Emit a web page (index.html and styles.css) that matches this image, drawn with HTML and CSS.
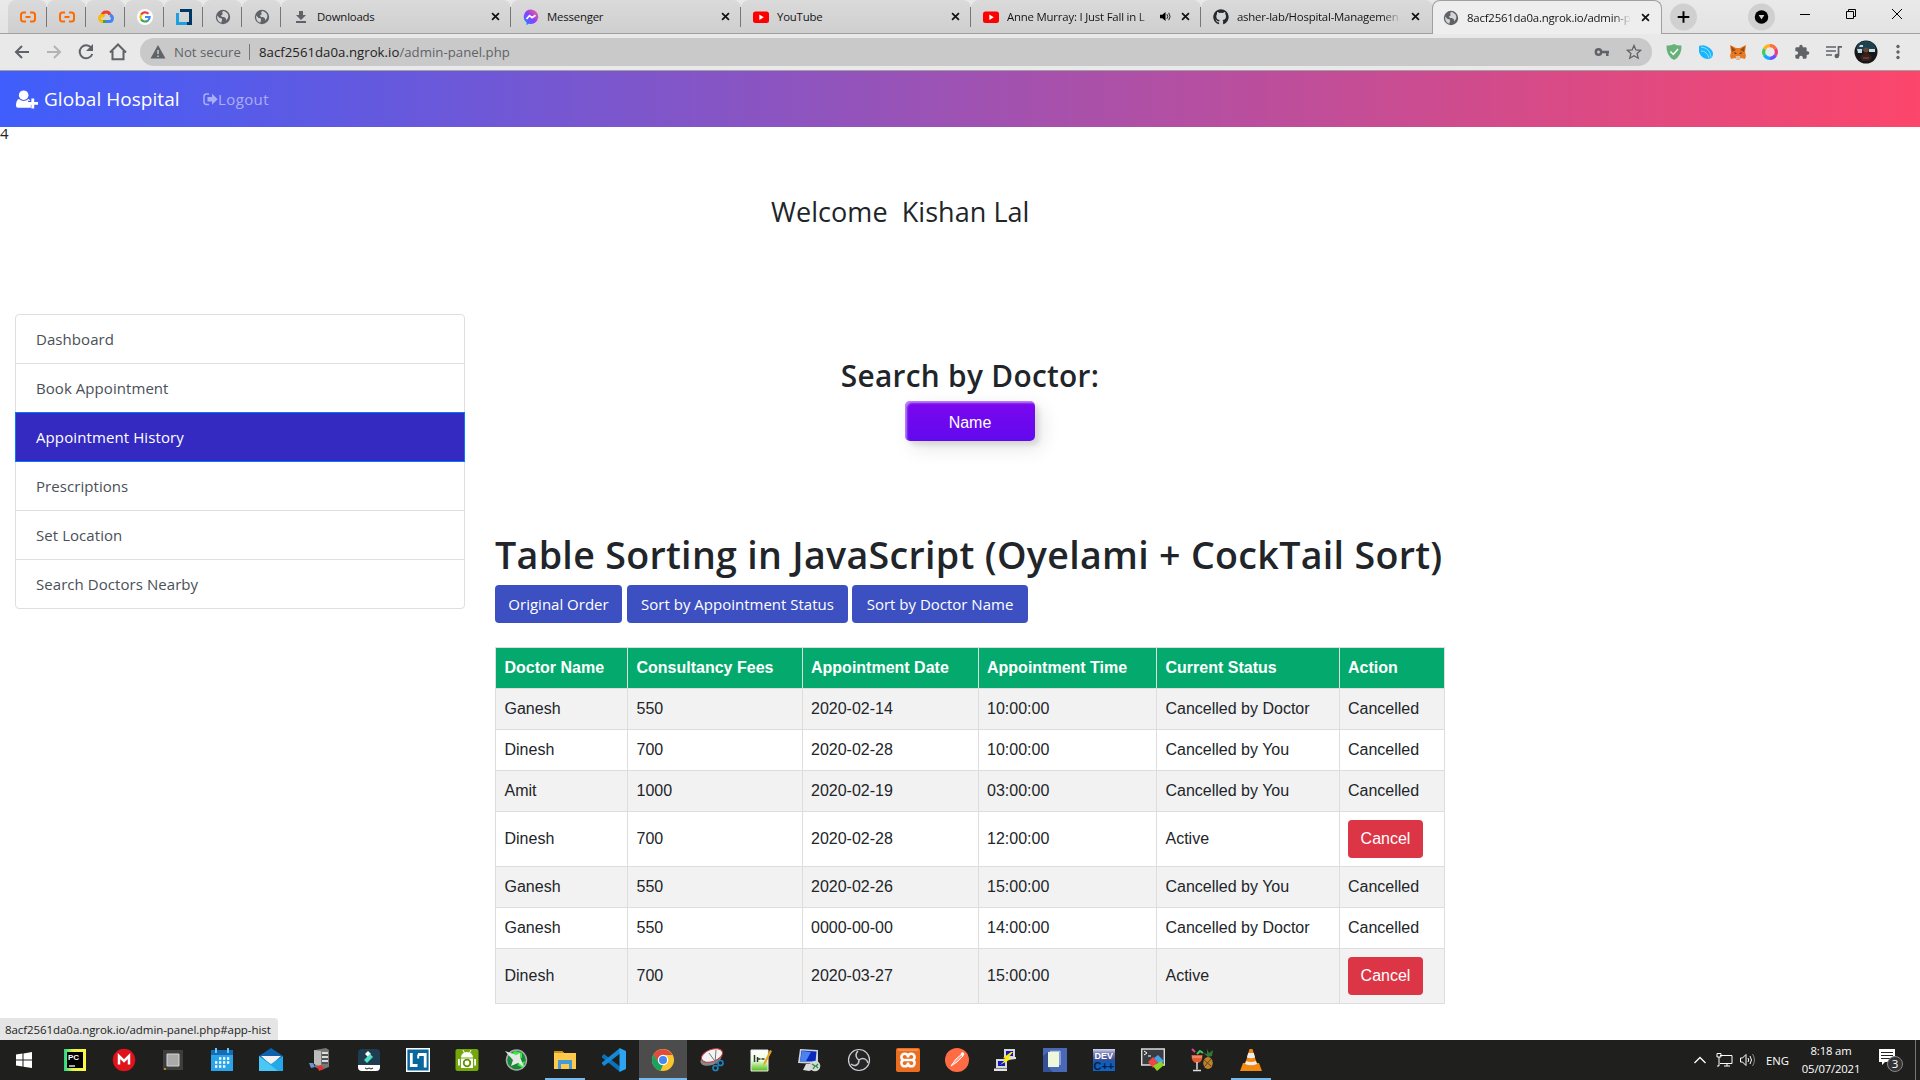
FILE: index.html
```html
<!DOCTYPE html>
<html lang="en">
<head>
<meta charset="utf-8">
<title>Global Hospital</title>
<link rel="stylesheet" href="styles.css">
</head>
<body>
<svg class="defs" width="0" height="0">
  <symbol id="globe" viewBox="0 0 16 16"><circle cx="8" cy="8" r="7.2" fill="#5f6368"/><path d="M2.2 6.5 4.5 9l2 .3.6 1.2-.8 3.2C3.5 13 1.8 10.500 2.200 6.500ZM8 2l-1 2 1 1-2 1.500 1 1.500h2l2 1.500v2l2-2.500C14.300 6 12 2.500 8 2Z" fill="#d5d5d5"/></symbol>
  <symbol id="close" viewBox="0 0 10 10"><path d="m1.200 1.200 7.600 7.600m0-7.600L1.200 8.800" stroke="#111" stroke-width="1.900"/></symbol>
  <symbol id="ngrok" viewBox="0 0 16 16"><path d="M6 3.500H3.500Q1 3.500 1 6v4q0 2.500 2.500 2.500H6M10 3.500h2.500Q15 3.500 15 6v4q0 2.500-2.500 2.500H10M5.500 8h5" fill="none" stroke="#ff6a00" stroke-width="2"/></symbol>
  <symbol id="youtube" viewBox="0 0 16 16"><rect y="2.500" width="16" height="11.500" rx="2.500" fill="#f00"/><path d="m6.300 5.500 4.500 2.700-4.500 2.700Z" fill="#fff"/></symbol>
</svg>

<header class="browser">
  <div class="tabstrip">
    <div class="tab pinned"><svg class="fav"><use href="#ngrok"/></svg></div>
    <div class="tab pinned"><svg class="fav"><use href="#ngrok"/></svg></div>
    <div class="tab pinned"><svg class="fav" viewBox="0 0 16 16" fill="none" stroke-width="3"><path d="M4 6.500C5 2 11 2 12 6" stroke="#ea4335"/><path d="M12 6c3.500 1 3 6.500-.500 6.500H8" stroke="#4285f4"/><path d="M8 12.500H4.500" stroke="#34a853"/><path d="M5 12.500C.800 12.500.500 7 4 6.500q1.500 0 2.500 1" stroke="#fbbc05"/></svg></div>
    <div class="tab pinned"><svg class="fav" viewBox="0 0 16 16"><circle cx="8" cy="8" r="8" fill="#fff"/><g fill="none" stroke-width="2.100"><path d="M4.100 5.600A4.700 4.700 0 0 1 11.500 4.800" stroke="#ea4335"/><path d="M4.100 5.600a4.700 4.700 0 0 0 0 4.800" stroke="#fbbc05"/><path d="M4.100 10.400a4.700 4.700 0 0 0 6.800 1.200" stroke="#34a853"/><path d="M10.900 11.600A4.500 4.500 0 0 0 12.700 8H8" stroke="#4285f4"/></g></svg></div>
    <div class="tab pinned"><svg class="fav" viewBox="0 0 16 16"><path d="M4 0h12v16h-5v-3h2V3H4Z" fill="#003865"/><path d="M0 4h3v9h8v3H0Z" fill="#1ba0e2"/></svg></div>
    <div class="tab pinned"><svg class="fav"><use href="#globe"/></svg></div>
    <div class="tab pinned"><svg class="fav"><use href="#globe"/></svg></div>
    <div class="tab"><svg class="fav" viewBox="0 0 16 16"><path d="M6 2h4v4h3l-5 5-5-5h3ZM3 12h10v2H3Z" fill="#5f6368"/></svg><span class="label">Downloads</span><svg class="x"><use href="#close"/></svg></div>
    <div class="tab"><svg class="fav" viewBox="0 0 16 16"><defs><linearGradient id="msg" x1="0" y1="1" x2="1" y2="0"><stop stop-color="#0895ff"/><stop offset=".5" stop-color="#8f3cff"/><stop offset="1" stop-color="#ff6c77"/></linearGradient></defs><path d="M8 .500a7.500 7.200 0 1 1-2 14.200L3.500 16v-2.500A7.300 7.300 0 0 1 8 .500Z" fill="url(#msg)"/><path d="m3.500 10 3-3.300 2.500 2 3.500-2.500" fill="none" stroke="#fff" stroke-width="1.700"/></svg><span class="label">Messenger</span><svg class="x"><use href="#close"/></svg></div>
    <div class="tab"><svg class="fav"><use href="#youtube"/></svg><span class="label">YouTube</span><svg class="x"><use href="#close"/></svg></div>
    <div class="tab"><svg class="fav"><use href="#youtube"/></svg><span class="label fade murray">Anne Murray: I Just Fall in L</span><svg class="speaker" viewBox="0 0 12 12"><path d="M0 4h2.500L6 1v10L2.500 8H0Z"/><path d="M7.500 3.500q2 2.500 0 5M9.500 2q3 4 0 8" fill="none" stroke="#111"/></svg><svg class="x"><use href="#close"/></svg></div>
    <div class="tab last"><svg class="fav" viewBox="0 0 16 16"><path d="M8 .300a7.700 7.700 0 0 0-2.500 15c.500 0 .600-.200.600-.500v-1.500c-2 .400-2.600-.900-2.800-1.500-.200-.500-.700-.900-1.200-1.200 1-.300 1.600.700 2.100 1.300.600.700 1.400.500 2 .200 0-.500.300-.900.600-1.100-1.900-.200-3.500-.900-3.500-3.800 0-.900.300-1.500.800-2.100-.300-.700-.100-1.500.100-2 .800 0 1.500.400 2.100.800a7 7 0 0 1 3.700 0c.700-.500 1.400-.800 2.100-.800.300.600.300 1.400.1 2 .500.600.800 1.300.8 2.100 0 2.900-1.700 3.600-3.500 3.800.400.300.600.800.600 1.500v2.300c0 .300.100.500.600.400A7.700 7.700 0 0 0 8 .300Z" fill="#24292e"/></svg><span class="label fade asher">asher-lab/Hospital-Managemen</span><svg class="x"><use href="#close"/></svg></div>
    <div class="tab active"><svg class="fav"><use href="#globe"/></svg><span class="label fade">8acf2561da0a.ngrok.io/admin-p</span><svg class="x"><use href="#close"/></svg></div>
    <svg class="round newtab" viewBox="0 0 28 28"><circle cx="14" cy="14" r="14" fill="#d0d0d0"/><path d="M8 14h12M14 8v12" stroke="#000" stroke-width="2"/></svg>
    <div class="window-controls">
      <svg class="round" viewBox="0 0 28 28"><circle cx="14" cy="14" r="14" fill="#d0d0d0"/><circle cx="14" cy="14" r="7" fill="#000"/><path d="M11 12h6l-3 4.500Z" fill="#d0d0d0"/></svg>
      <svg class="wc" viewBox="0 0 46 28"><path d="M18 14.500h10" stroke="#000"/></svg>
      <svg class="wc" viewBox="0 0 46 28"><path d="M18.500 11.500h7v7h-7ZM20.500 11V9.500h7v7H26" fill="none" stroke="#000"/></svg>
      <svg class="wc" viewBox="0 0 46 28"><path d="m18 9 10 10M28 9 18 19" stroke="#000"/></svg>
    </div>
  </div>
  <div class="toolbar">
    <svg class="tool" viewBox="0 0 24 24"><path d="M19 12H6m6-6-6 6 6 6" class="line"/></svg>
    <svg class="tool pale" viewBox="0 0 24 24"><path d="M5 12h13m-6-6 6 6-6 6" class="line"/></svg>
    <svg class="tool" viewBox="0 0 24 24"><path d="M17.500 8A6.500 6.500 0 1 0 18.300 14" class="line"/><path d="M19 4v7h-7Z" fill="#5f6368"/></svg>
    <svg class="tool" viewBox="0 0 24 24"><path d="m4 12.500 8-8 8 8M6.500 11v8.200h11V11" class="line"/></svg>
    <div class="omnibox">
      <svg class="warn" viewBox="0 0 16 16"><path d="M8 1 15.500 14.500H.500Z" fill="#5f6368"/><path d="M8 6v4M8 11.500v1.500" stroke="#ccc" stroke-width="1.500"/></svg>
      <span class="secure">Not secure</span><i class="divider"></i><span class="url">8acf2561da0a.ngrok.io<em>/admin-panel.php</em></span>
      <svg class="oicon" viewBox="0 0 16 16"><circle cx="4.500" cy="8" r="2.700" fill="none" stroke="#5f6368" stroke-width="2.400"/><path d="M8 8h7M13.300 8v4" stroke="#5f6368" stroke-width="2.500"/></svg>
      <svg class="oicon" viewBox="0 0 16 16"><path d="m8 1.500 1.900 4.400 4.800.400-3.600 3.200 1.100 4.700L8 11.700l-4.200 2.500 1.100-4.700-3.600-3.200 4.800-.400Z" fill="none" stroke="#5f6368" stroke-width="1.300"/></svg>
    </div>
    <div class="extensions">
      <svg viewBox="0 0 16 16"><path d="M8 0q4 2 7.500 1.500Q16 12 8 16 0 12 .500 1.500 4 2 8 0Z" fill="#67b279"/><path d="m4.500 7.500 2.800 3L12 5" fill="none" stroke="#fff" stroke-width="1.400"/></svg>
      <svg viewBox="0 0 16 16"><path d="M1 2q5-2 9 1 5 3 5 7 0 5-6 5-6-1-8-7Z" fill="#19b5fe"/><path d="M3 3q9 1 10 10M3 7q6 0 8 7" fill="none" stroke="#8be3ff"/></svg>
      <svg viewBox="0 0 16 16"><path d="m0 1 6 3h4l6-3-1 7 1 4-1 3-4-1-1.500 1.500h-3L5 14l-4 1-1-3 1-4Z" fill="#e9781f"/><path d="m1 2 5 4-4 2Zm14 0-5 4 4 2Z" fill="#9b4a19"/><path d="m4 8 3 1.500-2 .500Zm8 0L9 9.500l2 .500Z" fill="#233447"/><path d="M6 12h4l.500 3h-5Z" fill="#d7c1b3"/></svg>
      <svg viewBox="0 0 16 16" fill="none" stroke-width="3.200"><path d="M8 1.700a6.300 6.300 0 0 1 5.500 3.200" stroke="#ff6d3a"/><path d="M13.500 4.900a6.300 6.300 0 0 1 0 6.200" stroke="#e83d79"/><path d="M13.500 11.100A6.300 6.300 0 0 1 8 14.300" stroke="#6b4bff"/><path d="M8 14.300a6.300 6.300 0 0 1-5.500-3.200" stroke="#12a9ff"/><path d="M2.500 11.100a6.300 6.300 0 0 1 0-6.200" stroke="#39cf5a"/><path d="M2.500 4.900A6.300 6.300 0 0 1 8 1.700" stroke="#ffb321"/></svg>
      <svg viewBox="0 0 24 24"><path d="M20.500 11H19V7a2 2 0 0 0-2-2h-4V3.500a2.500 2.500 0 0 0-5 0V5H4a2 2 0 0 0-2 2v3.800h1.500a2.700 2.700 0 0 1 0 5.400H2V20c0 1.100.900 2 2 2h3.800v-1.500a2.700 2.700 0 0 1 5.400 0V22H17a2 2 0 0 0 2-2v-4h1.500a2.500 2.500 0 0 0 0-5Z" fill="#5f6368"/></svg>
      <svg viewBox="0 0 16 16"><path d="M0 3h10M0 7h10M0 11h6M12.500 12V2.800H16" fill="none" stroke="#5f6368" stroke-width="1.700"/><circle cx="10.800" cy="12" r="2.300" fill="#5f6368"/></svg>
      <svg class="avatar" viewBox="0 0 24 24"><circle cx="12" cy="12" r="11.500" fill="#171719"/><path d="M2 9q2-8 10-8t10 8l-3 2H5Z" fill="#1d4350"/><path d="M3 9h5v4H4Zm3-4h3v2H5Zm9 4h6v3h-6Z" fill="#c9dce0"/><circle cx="12" cy="10" r="2.600" fill="#6e4534"/><path d="M6 17q6-8 12 0l-2 4H8Z" fill="#38201c"/><path d="M9 18h6" stroke="#8a5a40"/></svg>
      <svg viewBox="0 0 16 16" fill="#5f6368"><circle cx="8" cy="2.500" r="1.700"/><circle cx="8" cy="8" r="1.700"/><circle cx="8" cy="13.500" r="1.700"/></svg>
    </div>
  </div>
</header>

<nav class="navbar">
  <svg class="userplus" viewBox="0 0 24 19"><circle cx="8" cy="5" r="5" fill="#fff"/><path d="M3 9q5 4 10 0 1.500.500 2 1.800h-2.500v3.500h3V18H2q-2 0-2-2 0-6 3-7ZM16 8.500h3V12h4v3h-4v4h-3v-4h-3.500v-3H16Z" fill="#fff"/></svg>
  <span class="brand">Global Hospital</span>
  <a class="logout"><svg viewBox="0 0 15 13"><path d="M6 1H3.500Q1 1 1 3.500v5Q1 11.500 3.500 11.500H6" fill="none" stroke="currentColor" stroke-width="1.500"/><path d="M4.500 4H9V.800l5.700 5.400L9 11.700V8.500H4.500Z" fill="currentColor"/></svg>Logout</a>
</nav>

<main class="page">
  <div class="count">4</div>
  <h3 class="welcome">Welcome &nbsp;Kishan Lal</h3>
  <div class="columns">
    <div class="menu">
      <a>Dashboard</a><a>Book Appointment</a><a class="on">Appointment History</a><a>Prescriptions</a><a>Set Location</a><a>Search Doctors Nearby</a>
    </div>
    <section class="content">
      <h2>Search by Doctor:</h2>
      <button class="name">Name</button>
      <h1>Table Sorting in JavaScript (Oyelami + CockTail Sort)</h1>
      <div class="sorts"><button class="s1">Original Order</button><button class="s2">Sort by Appointment Status</button><button class="s3">Sort by Doctor Name</button></div>
      <table>
        <colgroup><col class="c1"><col class="c2"><col class="c3"><col class="c4"><col class="c5"><col class="c6"></colgroup>
        <tr><th>Doctor Name</th><th>Consultancy Fees</th><th>Appointment Date</th><th>Appointment Time</th><th>Current Status</th><th>Action</th></tr>
        <tr><td>Ganesh</td><td>550</td><td>2020-02-14</td><td>10:00:00</td><td>Cancelled by Doctor</td><td>Cancelled</td></tr>
        <tr><td>Dinesh</td><td>700</td><td>2020-02-28</td><td>10:00:00</td><td>Cancelled by You</td><td>Cancelled</td></tr>
        <tr><td>Amit</td><td>1000</td><td>2020-02-19</td><td>03:00:00</td><td>Cancelled by You</td><td>Cancelled</td></tr>
        <tr><td>Dinesh</td><td>700</td><td>2020-02-28</td><td>12:00:00</td><td>Active</td><td><button class="cancel">Cancel</button></td></tr>
        <tr><td>Ganesh</td><td>550</td><td>2020-02-26</td><td>15:00:00</td><td>Cancelled by You</td><td>Cancelled</td></tr>
        <tr><td>Ganesh</td><td>550</td><td>0000-00-00</td><td>14:00:00</td><td>Cancelled by Doctor</td><td>Cancelled</td></tr>
        <tr><td>Dinesh</td><td>700</td><td>2020-03-27</td><td>15:00:00</td><td>Active</td><td><button class="cancel">Cancel</button></td></tr>
      </table>
    </section>
  </div>
  <div class="status">8acf2561da0a.ngrok.io/admin-panel.php#app-hist</div>
</main>

<footer class="taskbar">
  <div class="app start"><svg viewBox="0 0 24 24"><path d="m4 6.500 6.500-1v6H4Zm7.500-1.100L20 4v7.500h-8.500ZM4 12.500h6.500v6L4 17.500Zm7.500 0H20V20l-8.500-1.300Z" fill="#fff"/></svg></div>
  <div class="app"><svg viewBox="0 0 24 24"><defs><linearGradient id="pc"><stop stop-color="#21d789"/><stop offset=".4" stop-color="#e5f34c"/><stop offset="1" stop-color="#fcf84a"/></linearGradient></defs><path d="M1 1h22v22H1Z" fill="url(#pc)"/><path d="M4 4h16v16H4Z" fill="#000"/><path d="M6 18h6" stroke="#fff" stroke-width="1.300"/><text x="5" y="12" class="glyph" font-size="8" fill="#fff">PC</text></svg></div>
  <div class="app"><svg viewBox="0 0 24 24"><circle cx="12" cy="12" r="11.200" fill="#e0121b"/><path d="M7 16.500V8l5 5 5-5v8.500" fill="none" stroke="#fff" stroke-width="2.500"/></svg></div>
  <div class="app"><svg viewBox="0 0 24 24"><path d="M2 2h20v20H2Z" fill="#3d3d3c"/><path d="M6 6h12v12H6Z" fill="#aaa" stroke="#d5d5d5"/><path d="M3 20h2v2H3Z" fill="#b28722"/></svg></div>
  <div class="app"><svg viewBox="0 0 24 24"><path d="M1 3h22v20H1Z" fill="#2aa4ea"/><path d="M1 2h22v5H1Z" fill="#176bb5"/><path d="M6 0v5M18 0v5" stroke="#63c9ff" stroke-width="2"/><path d="M9 10.500h11M5 14.500h15M5 18.500h11" stroke="#fff" stroke-width="2.300" stroke-dasharray="2.300 1.700"/></svg></div>
  <div class="app"><svg viewBox="0 0 24 24"><path d="M0 8 12 0l12 8v15H0Z" fill="#0b62ad"/><path d="M2 8h20l-10 9Z" fill="#f1f1f1"/><path d="m0 8 12 8 12-8v15H0Z" fill="#25a8ea"/><path d="m0 8 19 15H0Z" fill="#4bc7f5"/></svg></div>
  <div class="app"><svg viewBox="0 0 24 24"><path d="m7 2 11-2 3 2v17l-8 3-6-3Z" fill="#777"/><path d="m6 2 7 1v16l-7-3Z" fill="#bbb"/><path d="M14 5h6M14 9h6M14 13h6" stroke="#ddd" stroke-width="2"/><path d="M14 7h6M14 11h6M14 15h6" stroke="#333"/><path d="m1 15 4 0 2 4-4 1Z" fill="#6f94d4"/><path d="m9 18 4-1 3 4-5 2Z" fill="#e33131"/></svg></div>
  <div class="app"><svg viewBox="0 0 24 24"><rect x="1" y="1" width="22" height="22" rx="4" fill="#203c50"/><path d="m8 6 3-3 3 3-3 3Z" fill="#fff"/><path d="m7 12 6-6 3 3-6 6Z" fill="#50dfc2"/><path d="M1 17h22v2q0 4-4 4H5q-4 0-4-4Z" fill="#fff"/><path d="m8 20 2 1 2-1 2 1 2-1" fill="none" stroke="#222"/></svg></div>
  <div class="app"><svg viewBox="0 0 24 24"><path d="M.700.700h22.600v22.600H.700Z" fill="#08679d" stroke="#fff" stroke-width="1.400"/><path d="M5.300 5v12.500h6.200M12 6.500h7.200V19.500" fill="none" stroke="#fff" stroke-width="2.800"/><path d="M12.200 6.500v4" stroke="#fff" stroke-width="2"/></svg></div>
  <div class="app"><svg viewBox="0 0 24 24"><rect x="0.500" y="1" width="23" height="22" rx="2" fill="#74a80a"/><path d="M6 9.500a6 5.500 0 0 1 12 0ZM6 10.500h12V20H6ZM3 11h1.800v6.500H3Zm16.200 0H21v6.500h-1.800Z" fill="#fff"/><path d="m8 2 1.500 3M16 2l-1.500 3" stroke="#fff"/><circle cx="12" cy="15" r="3.300" fill="none" stroke="#629108" stroke-width="1.800"/></svg></div>
  <div class="app"><svg viewBox="0 0 24 24"><circle cx="12.500" cy="12" r="10" fill="#168a38" stroke="#aaa" stroke-width="1.500"/><path d="m5 8 6-5 7 2v5ZM13 17l6 3 2-7Z" fill="#3bea43"/><path d="m1 3 11 4 4-2v4l4 10-6-4-7 3 2-6Z" fill="#e6e8e4"/></svg></div>
  <div class="app running"><svg viewBox="0 0 24 24"><path d="M1 3h8l2 2h12v16H1Z" fill="#ffca4b"/><path d="M1 3h8l2 2H1Z" fill="#d39113"/><path d="M5 12h14v9h-3v-5H8v5H5Z" fill="#459bd8"/></svg></div>
  <div class="app"><svg viewBox="0 0 24 24"><path d="m0 8 2-2 16 12.500V24L0 9.500Z" fill="#0873b9"/><path d="m0 15.500 2 2.500L18 5.500V0L0 14.500Z" fill="#1688d5"/><path d="m17.500 0 6.500 3v18l-6.500 3Z" fill="#2ca4f2"/></svg></div>
  <div class="app running current"><svg viewBox="0 0 24 24"><circle cx="12" cy="12" r="11" fill="#fbc62d"/><path d="M2.500 6.500A11 11 0 0 1 21.500 7H12l-5 7Z" fill="#df4b3f"/><path d="M2.500 6.500 8 15l4 2-2.500 5.800A11 11 0 0 1 2.500 6.500Z" fill="#1ba35d"/><circle cx="12" cy="12" r="5.200" fill="#fff"/><circle cx="12" cy="12" r="4" fill="#4688ee"/></svg></div>
  <div class="app"><svg viewBox="0 0 24 24"><ellipse cx="11" cy="11" rx="11" ry="6" transform="rotate(-20 11 11)" fill="#888"/><ellipse cx="12" cy="7.500" rx="11" ry="6" transform="rotate(-20 12 7.500)" fill="#f3f3f3" stroke="#c8373d"/><path d="m9 5 8 11m-1-14-1 13" stroke="#777"/><circle cx="15.500" cy="20" r="2.500" fill="none" stroke="#1c83bd" stroke-width="1.700"/><circle cx="20.500" cy="15" r="2.500" fill="none" stroke="#1c83bd" stroke-width="1.700"/></svg></div>
  <div class="app"><svg viewBox="0 0 24 24"><defs><linearGradient id="note" x2="0" y2="1"><stop stop-color="#fff"/><stop offset=".5" stop-color="#eaffdb"/><stop offset="1" stop-color="#54ba14"/></linearGradient></defs><path d="M2 2h17v21H2Z" fill="url(#note)" stroke="#eee"/><path d="M5.500 7v7m3-5v5m0-3h3m1 0h3" stroke="#333" stroke-width="1.500"/><path d="m14 18 1-4 6-12 2 1-6 12Z" fill="#e7a51d"/></svg></div>
  <div class="app"><svg viewBox="0 0 24 24"><path d="m2 1 18 1v14L0 15Z" fill="#ccd4df"/><path d="m3.500 2.500 15 1-1 10-15.500 0Z" fill="#0b28bc"/><path d="m4 3 9 1-5 9H2Z" fill="#4a82ee"/><path d="M8 16h8l3 4-8 3-6-1Z" fill="#ddd"/><circle cx="17" cy="18" r="5.300" fill="#d4d8d4"/><path d="m14 16 3 2-2 3m5-5-2 2 2 2" fill="none" stroke="#298b3c" stroke-width="1.300"/></svg></div>
  <div class="app"><svg viewBox="0 0 24 24"><circle cx="12" cy="12" r="10.500" fill="#252527" stroke="#d2d2d2" stroke-width="1.200"/><path d="M11 3c-4 4-1 8 1 9 4-3 8-1 9 3M12 12c0 5-4 7-8 4" fill="none" stroke="#c7c7c7" stroke-width="1.500"/></svg></div>
  <div class="app"><svg viewBox="0 0 24 24"><rect width="24" height="24" rx="2" fill="#eb6d20"/><path d="M2 2h20" stroke="#ffad76"/><path d="M12 9.500V8.500A3.300 3.300 0 1 0 7.500 12 3.300 3.300 0 1 0 12 15.500V14.500M12 8.500A3.300 3.300 0 1 1 16.500 12 3.300 3.300 0 1 1 12 15.500M8.500 12h7" fill="none" stroke="#fff" stroke-width="2.500"/></svg></div>
  <div class="app"><svg viewBox="0 0 24 24"><circle cx="12" cy="12" r="12" fill="#ff6c43"/><path d="m6 18 5-7 6-5 1 2-6 6Z" fill="#ffa286" stroke="#fff"/><circle cx="17.500" cy="6" r="1.800" fill="#fff"/></svg></div>
  <div class="app"><svg viewBox="0 0 24 24"><path d="M11 2h9v7h-9ZM3 12h9v7H3Z" fill="#1017c3" stroke="#d8d8d8" stroke-width="2"/><path d="m11 10 11-1v2l-9 1ZM0 20.500h13V23H0Z" fill="#e3e3e3"/><path d="m17 4-8 6 3 1-6 6 11-6-3-1 5-6Z" fill="#ffed00"/></svg></div>
  <div class="app"><svg viewBox="0 0 24 24"><path d="M0 0h24v24H0Z" fill="#4968b8"/><path d="m5 19 5 5H0V8l5-4Z" fill="#354f94"/><path d="M5 4h11v15H5Z" fill="#eef7dc"/><path d="M7 3.300h10V17" fill="none" stroke="#ccd5ee"/></svg></div>
  <div class="app"><svg viewBox="0 0 24 24"><defs><linearGradient id="dev" x2="0" y2="1"><stop stop-color="#d6d9f0"/><stop offset=".2" stop-color="#7479b4"/><stop offset=".5" stop-color="#434d94"/><stop offset=".55" stop-color="#145cb0"/><stop offset="1" stop-color="#1064c4"/></linearGradient></defs><path d="M1 1h22v22H1Z" fill="url(#dev)"/><text x="2.500" y="11" font-size="9" class="glyph" fill="#fff">DEV</text><text x="1.500" y="21.500" font-size="11" class="glyph" fill="#051c47">C++</text></svg></div>
  <div class="app"><svg viewBox="0 0 24 24"><path d="M.700 1h22.600v16H.700Z" fill="#393c40" stroke="#ddd" stroke-width="1.400"/><path d="m3 3 3 2-3 2m4 1h3" fill="none" stroke="#fff"/><path d="m7 14 5-5 5 5-5 6Z" fill="#eb4747"/><path d="m13 10 4-3 6 6-4 4Z" fill="#43a2ea"/><path d="m12 18 8-5 3 4-7 6Z" fill="#8dd328"/></svg></div>
  <div class="app"><svg viewBox="0 0 24 24"><path d="M1.500 7h11q0 8-5.500 8T1.500 7Z" fill="#e55a36"/><path d="M2 9h10" stroke="#f5b38e"/><path d="M7 14v7.500m-4 1h8" stroke="#ddd" stroke-width="1.500"/><path d="m2 1 3 3" stroke="#e2459a" stroke-width="2"/><path d="m7 6 3-3 3 2" fill="none" stroke="#40c95c" stroke-width="2"/><ellipse cx="18" cy="15" rx="4.800" ry="6" fill="#bc822d"/><path d="m18 9-5-4 4 1 0-5 2 4 4-3-1 6Z" fill="#31753b"/><path d="m14 12 7 6m0-7-7 8" stroke="#704613"/></svg></div>
  <div class="app running"><svg viewBox="0 0 24 24"><path d="M4 15h16l3 8H1Z" fill="#f08a11"/><path d="M10.500 1h3l5 17q-6.500 3-13 0Z" fill="#f58710"/><path d="m9.200 5-1.300 4.500q4 1.500 8.200 0L14.800 5ZM6.900 13l-.900 3q6 2.500 12 0l-.900-3q-5 2-10.200 0Z" fill="#eee"/></svg></div>
  <div class="tray">
    <svg class="chev" viewBox="0 0 12 8"><path d="m.500 7 5.500-5.500L11.500 7" fill="none" stroke="#fff" stroke-width="1.300"/></svg>
    <svg class="net" viewBox="0 0 17 14"><path d="M4 2.500h12v8H4M8 13h6m-3-2.500V13M1 .500h4V4H1Zm2 3.500v9H1" fill="none" stroke="#fff"/></svg>
    <svg class="vol" viewBox="0 0 17 14"><path d="M.500 5h2L6 1.500v11L2.500 9h-2Z" fill="none" stroke="#fff"/><path d="M8 5q1.500 2 0 4M10 3q3 4 0 8" fill="none" stroke="#fff"/><path d="M12.500 1q4 6 0 12" fill="none" stroke="#888"/></svg>
    <span class="lang">ENG</span>
    <div class="clock"><span>8:18 am</span><span>05/07/2021</span></div>
    <svg class="note" viewBox="0 0 24 24"><path d="M0 0h16v13H6l-3 3v-3H0Z" fill="#fff"/><path d="M2 3.500h12M2 6.500h12M2 9.500h12" stroke="#222"/><circle cx="16" cy="15" r="7.500" fill="#333" stroke="#888"/><text x="12.800" y="19.300" font-size="11.500" class="num" fill="#fff">3</text></svg>
    <i class="peek"></i>
  </div>
</footer>
</body>
</html>
```
FILE: styles.css
```css
* { box-sizing: border-box; }
body { margin: 0; width: 1920px; height: 1080px; overflow: hidden; display: flex; flex-direction: column; background: #fff; color: #212529; font-family: "Open Sans", "Noto Sans", sans-serif; font-size: 15px; }
svg { display: block; flex: none; }
button { border: 0; padding: 0; font: inherit; color: #fff; }
.defs { display: none; }

/* Browser window */
.browser { flex: none; height: 71px; border-bottom: 1px solid #a0a0a0; background: #e9e9e9; }
.tabstrip { display: flex; height: 34px; padding-left: 8px; background: linear-gradient(#e9e9e9, #e3e3e3); box-shadow: inset 0 -1px #a0a0a0; }
.tab { position: relative; flex: none; display: flex; align-items: center; width: 230px; height: 33px; padding-left: 12px; background: linear-gradient(#dadada, #cfcfcf); border-radius: 8px 8px 0 0; font-size: 11.4px; letter-spacing: -0.2px; color: #151515; }
.tab::after { content: ""; position: absolute; right: 0; top: 7px; width: 1px; height: 20px; background: #777; }
.tab.pinned { width: 39px; }
.tab.last { width: 232px; padding-right: 2px; }
.tab.last::after, .tab.active::after { display: none; }
.tab.active { width: 230px; height: 34px; margin-left: -1px; background: #eee; border: 1px solid #a0a0a0; border-bottom: 0; }
.tab.active .fav { margin-left: -2px; }
.fav { width: 16px; height: 16px; }
.label { flex: 1; margin-left: 8px; overflow: hidden; white-space: nowrap; line-height: 20px; }
.label.fade { -webkit-mask-image: linear-gradient(90deg, #000 calc(100% - 18px), transparent); mask-image: linear-gradient(90deg, #000 calc(100% - 18px), transparent); }
.murray { letter-spacing: -0.2px; margin-right: -4px; }
.asher { letter-spacing: -0.22px; }
.x { width: 9px; height: 9px; margin: 0 11px 0 10px; }
.speaker { width: 11px; height: 11px; margin-left: 8px; }
.newtab { margin-left: 8px; }
.round { width: 27px; height: 28px; margin-top: 3px; }
.window-controls { display: flex; margin-left: auto; }
.window-controls .round { margin-right: 7px; }
.wc { width: 46px; height: 28px; }
.toolbar { display: flex; align-items: center; height: 36px; padding-left: 10px; }
.tool { width: 24px; height: 24px; margin-right: 8px; }
.line { fill: none; stroke: #5f6368; stroke-width: 2; }
.pale { opacity: .4; }
.omnibox { display: flex; align-items: center; width: 1512px; height: 28px; margin-left: 2px; padding: 0 10px; border-radius: 14px; background: #c9c9c9; font-size: 13.2px; color: #5f6368; }
.warn { width: 16px; height: 16px; margin-right: 8px; }
.secure { width: 75px; }
.divider { width: 1px; height: 16px; background: #777; margin-right: 9px; }
.url { flex: 1; color: #222; letter-spacing: 0.03px; }
.url em { font-style: normal; color: #5f6368; }
.oicon { width: 16px; height: 16px; margin-left: 16px; }
.extensions { display: flex; align-items: center; gap: 16px; margin-left: 14px; }
.extensions svg { width: 16px; height: 16px; }
.extensions .avatar { width: 24px; height: 24px; margin: 0 -4px; }

/* Site header */
.navbar { flex: none; display: flex; align-items: center; height: 56px; padding: 0 0 0 16px; background: linear-gradient(to right, #3f5efb, #fc466b); color: #fff; }
.userplus { width: 23px; height: 19px; margin-right: 5px; }
.brand { width: 159px; font-size: 19px; line-height: 30px; letter-spacing: .04px; }
.logout { display: flex; align-items: center; color: rgba(255,255,255,.5); letter-spacing: .4px; }
.logout svg { width: 15px; height: 13px; }

/* Page */
.page { position: relative; flex: none; height: 913px; }
.count { height: 16px; line-height: 12px; }
.welcome { margin: 49px 0 0 771px; height: 40px; line-height: 40px; font-size: 27px; font-weight: 400; letter-spacing: .05px; white-space: pre; }
.columns { display: flex; gap: 30px; margin-top: 82px; padding-left: 15px; }
.menu { width: 450px; height: 295px; border: 1px solid #dfdfdf; border-radius: 4px; letter-spacing: .06px; }
.menu a { display: block; height: 49px; padding: 0 20px; border-bottom: 1px solid #dfdfdf; line-height: 48px; color: #495057; }
.menu a:last-child { border: 0; }
.menu a.on { height: 50px; margin: -1px -1px 0; padding: 0 20px; line-height: 48px; border: 1px solid #007bff; background: #342ac1; color: #fff; letter-spacing: .1px; }
.content { width: 950px; display: flex; flex-direction: column; align-items: center; }
h1, h2 { font-weight: 600; white-space: nowrap; margin: 0; letter-spacing: .31px; }
h2 { margin-top: 43px; height: 38px; line-height: 38px; font-size: 29.800px; }
.name { width: 130px; height: 40px; margin-top: 6px; padding-top: 3px; border-radius: 5px; background: linear-gradient(#7c07ee, #6109ee); box-shadow: inset 2px 2px 2px rgba(255,255,255,.5), 7px 7px 20px rgba(0,0,0,.1), 4px 4px 5px rgba(0,0,0,.1); font: 16px "Liberation Sans", sans-serif; }
h1 { margin-top: 90px; height: 48px; line-height: 48px; font-size: 37.600px; align-self: flex-start; }
.sorts { display: flex; gap: 5px; align-self: flex-start; margin-top: 6px; letter-spacing: .12px; }
.sorts button { height: 38px; border-radius: 4px; background: #3c50c1; white-space: nowrap; }
.s1 { width: 127px; }
.s2 { width: 221px; }
.sorts .s3 { width: 176px; margin-left: -1px; }
table { width: 949px; margin-top: 24px; align-self: flex-start; border-collapse: collapse; table-layout: fixed; font: 16px/24px "Liberation Sans", sans-serif; }
.c1 { width: 132px; } .c2 { width: 175px; } .c3 { width: 176px; } .c4 { width: 178px; } .c5 { width: 183px; } .c6 { width: 105px; }
th, td { border: 1px solid #ddd; padding: 8px 0 8px 8px; text-align: left; white-space: nowrap; }
th:nth-child(-n+2), td:nth-child(-n+2), th:nth-child(5), td:nth-child(5) { padding-left: 8.500px; }
th { background: #04aa6d; color: #fff; font-weight: 700; }
tr:nth-child(even) { background: #f2f2f2; }
.cancel { display: block; width: 75px; height: 38px; border-radius: 4px; background: #dc3545; }
.status { position: absolute; left: 0; bottom: 0; width: 278px; height: 22px; padding-left: 5px; border-radius: 0 4px 0 0; background: #e5e5e5; font-size: 11.5px; line-height: 23px; letter-spacing: -.07px; color: #222; white-space: nowrap; }

/* Desktop taskbar */
.taskbar { flex: none; display: flex; height: 40px; background: #1f1f1e; color: #fff; }
.app { flex: none; width: 49px; display: flex; align-items: center; justify-content: center; }
.app svg { width: 24px; height: 24px; }
.app.start { width: 50px; padding-right: 2px; }
.running { background: linear-gradient(#76b9ed, #76b9ed) center bottom / 40px 2px no-repeat; }
.running.current { background: linear-gradient(#76b9ed, #76b9ed) center bottom / 48px 2px no-repeat, linear-gradient(#4c4c4c, #4c4c4c) center / 48px 40px no-repeat; }
.glyph { font-family: "Liberation Sans", sans-serif; font-weight: 700; }
.num { font-family: "Open Sans", sans-serif; }
.tray { display: flex; align-items: center; margin-left: auto; font-size: 11.300px; }
.chev { width: 12px; height: 8px; margin-right: 10px; }
.net { width: 17px; height: 14px; margin-right: 7px; }
.vol { width: 17px; height: 14px; margin-right: 9px; }
.lang { width: 35px; }
.clock { display: flex; flex-direction: column; align-items: center; width: 60px; line-height: 18px; letter-spacing: -.15px; }
.note { width: 24px; height: 24px; margin: 2px 12px 0 18px; }
.peek { width: 1px; height: 40px; margin-right: 4px; background: #777; }
```
